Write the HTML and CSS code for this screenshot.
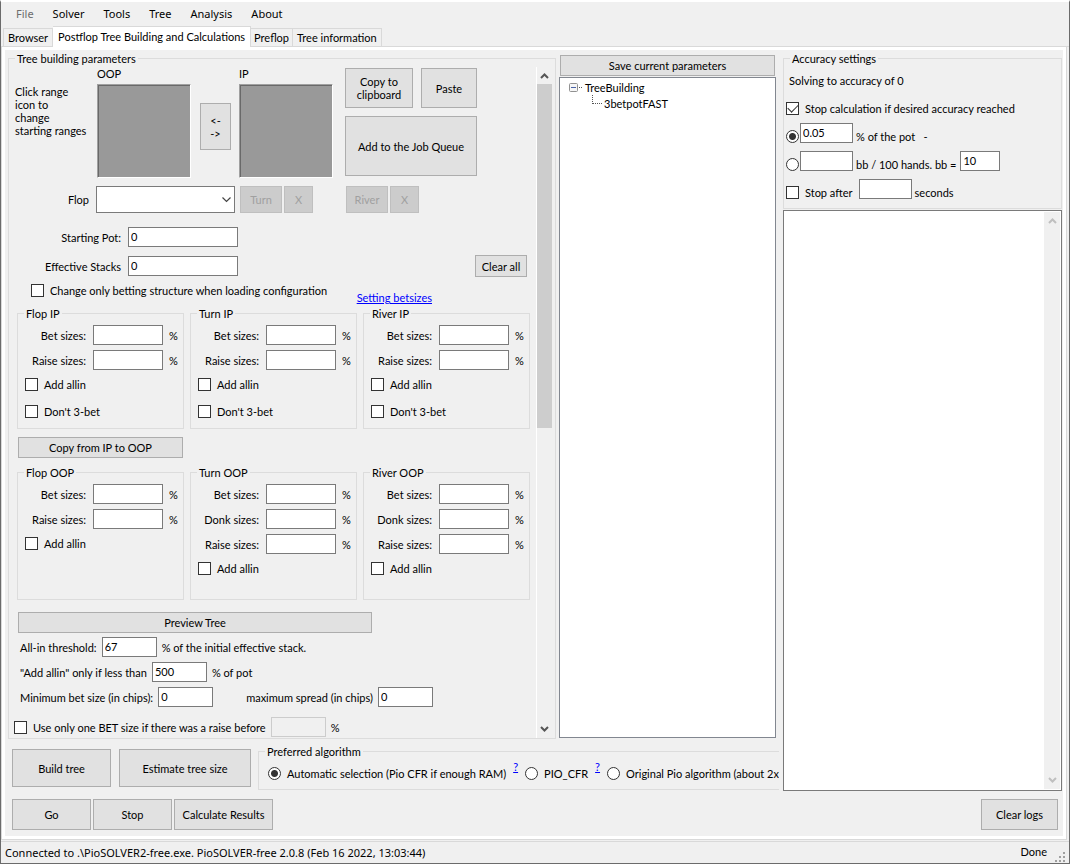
FILE: index.html
```html
<!DOCTYPE html>
<html lang="en">
<head>
    <meta charset="UTF-8">
    <meta name="viewport" content="width=device-width, initial-scale=1.0">
    <title>PioSOLVER</title>
    <link rel="stylesheet" href="styles.css">
</head>
<body>
    <!-- menu -->
    <nav class="menu">
        <button class="menu-item" disabled>File</button>
        <button class="menu-item">Solver</button>
        <button class="menu-item">Tools</button>
        <button class="menu-item">Tree</button>
        <button class="menu-item">Analysis</button>
        <button class="menu-item">About</button>
    </nav>

    <!-- tabs -->
    <div class="tabs" role="tablist">
        <button class="tab" role="tab">Browser</button>
        <button class="tab active" role="tab" aria-selected="true">Postflop Tree Building and Calculations</button>
        <button class="tab" role="tab">Preflop</button>
        <button class="tab info" role="tab">Tree information</button>
    </div>

    <main class="page">
        <div class="left">
            <div class="top">
                <!-- tree building parameters -->
                <fieldset class="group params">
                    <legend>Tree building parameters</legend>
                    <div class="scroll-body">
                        <div class="content">
                            <div class="ranges">
                                <p class="hint">Click range<br>icon to<br>change<br>starting ranges</p>
                                <div class="range">
                                    <span>OOP</span>
                                    <div class="range-box"></div>
                                </div>
                                <button class="btn swap">&lt;-<br>-&gt;</button>
                                <div class="range">
                                    <span>IP</span>
                                    <div class="range-box"></div>
                                </div>
                                <div class="clip-btns">
                                    <button class="btn">Copy to<br>clipboard</button>
                                    <button class="btn">Paste</button>
                                    <button class="btn queue">Add to the Job Queue</button>
                                </div>
                            </div>

                            <div class="board">
                                <label for="flop">Flop</label>
                                <div class="select-wrap">
                                    <select id="flop"><option></option></select>
                                    <svg width="9" height="6" viewBox="0 0 9 6"><path d="M0.5 0.5 L4.5 4.5 L8.5 0.5" fill="none" stroke="#444" stroke-width="1.2"/></svg>
                                </div>
                                <div class="street">
                                    <button class="btn card" disabled>Turn</button>
                                    <button class="btn" disabled>X</button>
                                </div>
                                <div class="street river">
                                    <button class="btn card" disabled>River</button>
                                    <button class="btn" disabled>X</button>
                                </div>
                            </div>

                            <div class="stack-row">
                                <label for="pot">Starting Pot:</label>
                                <input type="text" id="pot" class="wide" value="0">
                            </div>
                            <div class="stack-row">
                                <label for="stacks">Effective Stacks</label>
                                <input type="text" id="stacks" class="wide" value="0">
                                <button class="btn clear-all">Clear all</button>
                            </div>

                            <div class="config">
                                <label class="check"><input type="checkbox">Change only betting structure when loading configuration</label>
                                <a href="#">Setting betsizes</a>
                            </div>

                            <!-- IP bet sizes -->
                            <div class="streets ip">
                                <fieldset class="group">
                                    <legend>Flop IP</legend>
                                    <div class="size"><label for="fib">Bet sizes:</label><input type="text" id="fib"><span>%</span></div>
                                    <div class="size"><label for="fir">Raise sizes:</label><input type="text" id="fir"><span>%</span></div>
                                    <label class="check"><input type="checkbox">Add allin</label>
                                    <label class="check"><input type="checkbox">Don't 3-bet</label>
                                </fieldset>
                                <fieldset class="group">
                                    <legend>Turn IP</legend>
                                    <div class="size"><label for="tib">Bet sizes:</label><input type="text" id="tib"><span>%</span></div>
                                    <div class="size"><label for="tir">Raise sizes:</label><input type="text" id="tir"><span>%</span></div>
                                    <label class="check"><input type="checkbox">Add allin</label>
                                    <label class="check"><input type="checkbox">Don't 3-bet</label>
                                </fieldset>
                                <fieldset class="group">
                                    <legend>River IP</legend>
                                    <div class="size"><label for="rib">Bet sizes:</label><input type="text" id="rib"><span>%</span></div>
                                    <div class="size"><label for="rir">Raise sizes:</label><input type="text" id="rir"><span>%</span></div>
                                    <label class="check"><input type="checkbox">Add allin</label>
                                    <label class="check"><input type="checkbox">Don't 3-bet</label>
                                </fieldset>
                            </div>

                            <button class="btn copy">Copy from IP to OOP</button>

                            <!-- OOP bet sizes -->
                            <div class="streets oop">
                                <fieldset class="group">
                                    <legend>Flop OOP</legend>
                                    <div class="size"><label for="fob">Bet sizes:</label><input type="text" id="fob"><span>%</span></div>
                                    <div class="size"><label for="for">Raise sizes:</label><input type="text" id="for"><span>%</span></div>
                                    <label class="check"><input type="checkbox">Add allin</label>
                                </fieldset>
                                <fieldset class="group">
                                    <legend>Turn OOP</legend>
                                    <div class="size"><label for="tob">Bet sizes:</label><input type="text" id="tob"><span>%</span></div>
                                    <div class="size"><label for="tod">Donk sizes:</label><input type="text" id="tod"><span>%</span></div>
                                    <div class="size"><label for="tor">Raise sizes:</label><input type="text" id="tor"><span>%</span></div>
                                    <label class="check"><input type="checkbox">Add allin</label>
                                </fieldset>
                                <fieldset class="group">
                                    <legend>River OOP</legend>
                                    <div class="size"><label for="rob">Bet sizes:</label><input type="text" id="rob"><span>%</span></div>
                                    <div class="size"><label for="rod">Donk sizes:</label><input type="text" id="rod"><span>%</span></div>
                                    <div class="size"><label for="ror">Raise sizes:</label><input type="text" id="ror"><span>%</span></div>
                                    <label class="check"><input type="checkbox">Add allin</label>
                                </fieldset>
                            </div>

                            <button class="btn preview">Preview Tree</button>

                            <div class="limits">
                                <div class="limit">
                                    <label for="threshold">All-in threshold:</label>
                                    <input type="text" id="threshold" value="67">
                                    <span>% of the initial effective stack.</span>
                                </div>
                                <div class="limit">
                                    <label for="allin">"Add allin" only if less than</label>
                                    <input type="text" id="allin" value="500">
                                    <span>% of pot</span>
                                </div>
                                <div class="limit">
                                    <label for="minbet">Minimum bet size (in chips):</label>
                                    <input type="text" id="minbet" value="0">
                                    <label for="spread" class="spread">maximum spread (in chips)</label>
                                    <input type="text" id="spread" value="0">
                                </div>
                            </div>
                            <div class="limit one-bet">
                                <label class="check"><input type="checkbox">Use only one BET size if there was a raise before</label>
                                <input type="text" aria-label="Raise percent" disabled>
                                <span>%</span>
                            </div>
                        </div>

                        <div class="scrollbar">
                            <svg width="9" height="6" viewBox="0 0 9 6"><path d="M1 5 L4.5 1.5 L8 5" fill="none" stroke="#555" stroke-width="2"/></svg>
                            <div class="thumb"></div>
                            <svg width="9" height="6" viewBox="0 0 9 6"><path d="M1 1 L4.5 4.5 L8 1" fill="none" stroke="#555" stroke-width="2"/></svg>
                        </div>
                    </div>
                </fieldset>

                <!-- saved trees -->
                <div class="saved">
                    <button class="btn">Save current parameters</button>
                    <ul class="tree">
                        <li>
                            <svg width="14" height="9" viewBox="0 0 14 9"><rect x="0.5" y="0.5" width="8" height="8" rx="1" fill="#f6f6f6" stroke="#919191"/><path d="M2 4.5 H7" stroke="#4b63a7"/><path d="M10 4.5 H14" stroke="#555" stroke-dasharray="1 1"/></svg>
                            TreeBuilding
                        </li>
                        <li class="child">
                            <svg width="10" height="9" viewBox="0 0 10 9"><path d="M0.5 0 V9" stroke="#555" stroke-dasharray="1 1"/><path d="M1 8.5 H10" stroke="#555" stroke-dasharray="1 1"/></svg>
                            3betpotFAST
                        </li>
                    </ul>
                </div>
            </div>

            <div class="build">
                <button class="btn">Build tree</button>
                <button class="btn estimate">Estimate tree size</button>
                <fieldset class="group algorithm">
                    <legend>Preferred algorithm</legend>
                    <div class="options">
                        <label class="check"><input type="radio" name="algorithm" checked>Automatic selection (Pio CFR if enough RAM)</label>
                        <a href="#">?</a>
                        <label class="check"><input type="radio" name="algorithm">PIO_CFR</label>
                        <a href="#">?</a>
                        <label class="check"><input type="radio" name="algorithm">Original Pio algorithm (about 2x</label>
                    </div>
                </fieldset>
            </div>

            <div class="run">
                <button class="btn">Go</button>
                <button class="btn">Stop</button>
                <button class="btn results">Calculate Results</button>
            </div>
        </div>

        <div class="right">
            <fieldset class="group accuracy">
                <legend>Accuracy settings</legend>
                <p>Solving to accuracy of 0</p>
                <label class="check stop-calc"><input type="checkbox" checked>Stop calculation if desired accuracy reached</label>
                <div class="goal">
                    <input type="radio" name="goal" aria-label="Percent of the pot" checked>
                    <input type="text" id="percent" value="0.05">
                    <label for="percent">% of the pot &nbsp; -</label>
                </div>
                <div class="goal">
                    <input type="radio" name="goal" aria-label="bb per 100 hands">
                    <input type="text" id="hands">
                    <label for="hands">bb / 100 hands. bb =</label>
                    <input type="text" class="bb" aria-label="bb" value="10">
                </div>
                <div class="goal after">
                    <label class="check"><input type="checkbox">Stop after</label>
                    <input type="text" id="seconds">
                    <label for="seconds">seconds</label>
                </div>
            </fieldset>
            <div class="log">
                <div class="scrollbar off">
                    <svg width="9" height="6" viewBox="0 0 9 6"><path d="M1 5 L4.5 1.5 L8 5" fill="none" stroke="#bfbfbf" stroke-width="2"/></svg>
                    <svg width="9" height="6" viewBox="0 0 9 6"><path d="M1 1 L4.5 4.5 L8 1" fill="none" stroke="#bfbfbf" stroke-width="2"/></svg>
                </div>
            </div>
            <button class="btn clear-logs">Clear logs</button>
        </div>
    </main>

    <footer class="status">
        <span>Connected to .\PioSOLVER2-free.exe. PioSOLVER-free 2.0.8 (Feb 16 2022, 13:03:44)</span>
        <span class="done">Done</span>
        <svg width="11" height="11" viewBox="0 0 11 11" fill="#a0a0a0"><path d="M8 0h2v2h-2zM4 4h2v2h-2zM8 4h2v2h-2zM0 8h2v2h-2zM4 8h2v2h-2zM8 8h2v2h-2z"/></svg>
    </footer>
</body>
</html>
```
FILE: styles.css
```css
* {
    margin: 0;
    padding: 0;
    box-sizing: border-box;
}

body {
    display: flex;
    flex-direction: column;
    min-height: 100vh;
    border: 1px solid #6b6b6b;
    border-top: 2px solid #fff;
    background-color: #f0f0f0;
    color: #000;
    font: 11px/13px Lato, "Liberation Sans", sans-serif;
}

button,
input,
select {
    font: inherit;
    color: inherit;
}

a {
    color: #0000ff;
}

/* menu */
.menu {
    display: flex;
    gap: 19px;
    height: 24px;
    padding-left: 15px;
}

.menu-item {
    border: none;
    background: none;
    font: 11px/16px "Noto Sans", sans-serif;
}

.menu-item:disabled {
    color: #6d6d6d;
}

/* tabs */
.tabs {
    display: flex;
    align-items: flex-end;
    height: 21px;
    padding-left: 2px;
    border-bottom: 1px solid #d9d9d9;
}

.tab {
    height: 18px;
    padding: 0 3px;
    border: 1px solid #d9d9d9;
    border-bottom: none;
    background-color: #f0f0f0;
}

.tab:first-child {
    padding: 0 4px;
}

.tab + .tab {
    border-left: none;
}

.tab.info {
    padding: 0 4px;
}

.tab.active {
    height: 21px;
    padding: 0 5px 2px;
    margin-bottom: -1px;
    background-color: #fff;
}

/* page */
.page {
    flex: 1;
    display: flex;
    gap: 4px;
    margin-right: 2px;
    padding: 5px 4px 9px 3px;
    border: 1px solid #d9d9d9;
    border-top: none;
    box-shadow: inset 0 0 0 3px #fff;
}

.left {
    flex: 1;
    min-width: 0;
    display: flex;
    flex-direction: column;
    padding-left: 3px;
}

.group {
    min-width: 0;
    border: 1px solid #dcdcdc;
}

.group legend {
    margin-left: 6px;
    padding: 0 2px;
}

.btn {
    border: 1px solid #adadad;
    background-color: #e1e1e1;
    text-align: center;
}

.btn:disabled {
    border-color: #bfbfbf;
    background-color: #ccc;
    color: #a0a0a0;
}

input[type="text"] {
    width: 70px;
    height: 20px;
    padding: 0 2px 2px;
    border: 1px solid #7a7a7a;
    background-color: #fff;
}

input[type="text"]:disabled {
    border-color: #ccc;
    background-color: #f0f0f0;
}

input[type="checkbox"],
input[type="radio"] {
    appearance: none;
    flex: none;
    width: 13px;
    height: 13px;
    border: 1px solid #333;
    background-color: #fff;
}

input[type="radio"] {
    border-radius: 50%;
}

input[type="radio"]:checked {
    background-image: radial-gradient(circle, #333 3px, transparent 4px);
}

/* tick */
input[type="checkbox"]:checked::before {
    content: "";
    display: block;
    width: 9px;
    height: 5px;
    margin: 1px 1px;
    border: solid #333;
    border-width: 0 0 1px 1px;
    transform: rotate(-45deg);
}

.check {
    display: flex;
    align-items: center;
    gap: 6px;
    white-space: nowrap;
}

/* tree building parameters */
.top {
    flex: 1;
    display: flex;
    gap: 3px;
}

.params {
    flex: none;
    width: 548px;
}

.scroll-body {
    display: flex;
    height: 100%;
    padding: 2px 3px 0 0;
}

.content {
    flex: 1;
    padding: 0 6px 0 8px;
}

.ranges {
    display: flex;
}

.hint {
    width: 82px;
    margin-left: -2px;
    padding-top: 18px;
}

.range-box {
    width: 94px;
    height: 94px;
    margin-top: 4px;
    border: 1px solid;
    border-color: #a0a0a0 #fff #fff #a0a0a0;
    background-color: #999;
    box-shadow: inset 1px 1px #696969;
}

.swap {
    width: 31px;
    height: 47px;
    margin: 36px 8px 0 9px;
}

.clip-btns {
    display: grid;
    grid-template: 40px 60px / 68px 56px;
    gap: 8px;
    margin: 1px 0 0 12px;
}

.queue {
    grid-column: span 2;
}

.board {
    display: flex;
    align-items: center;
    margin-top: 8px;
}

.board label {
    width: 72px;
    margin-right: 7px;
    text-align: right;
}

.select-wrap {
    position: relative;
    width: 139px;
    height: 27px;
}

.select-wrap select {
    appearance: none;
    width: 100%;
    height: 100%;
    border: 1px solid #7a7a7a;
    border-radius: 0;
    background-color: #fff;
}

.select-wrap svg {
    position: absolute;
    top: 11px;
    right: 4px;
    pointer-events: none;
}

.street {
    display: flex;
    gap: 2px;
    margin-left: 5px;
}

.street .btn {
    width: 29px;
    height: 27px;
}

.street .card {
    width: 42px;
}

.street.river {
    margin-left: 33px;
}

.stack-row {
    display: flex;
    align-items: center;
    height: 20px;
    margin-top: 9px;
}

.board + .stack-row {
    margin-top: 14px;
}

.stack-row label {
    width: 104px;
    margin-right: 7px;
    text-align: right;
}

.stack-row .wide {
    width: 110px;
}

.clear-all {
    width: 52px;
    height: 22px;
    margin: 0 3px 0 auto;
}

.config {
    display: flex;
    justify-content: space-between;
    align-items: flex-start;
    margin-top: 8px;
    padding: 0 98px 0 14px;
}

.config a {
    margin-top: 7px;
}

/* bet sizes */
.streets {
    display: grid;
    grid-template-columns: repeat(3, 167px);
    gap: 6px;
}

.streets.ip {
    height: 122px;
    margin-top: 3px;
}

.streets.oop {
    height: 134px;
    margin-top: 8px;
}

.size {
    display: flex;
    align-items: center;
    padding-top: 5px;
}

.size label {
    width: 68px;
    margin-right: 7px;
    text-align: right;
}

.size span {
    margin-left: 6px;
}

.streets .check {
    margin: 8px 0 0 7px;
}

.streets .check + .check {
    margin-top: 14px;
}

.copy {
    width: 165px;
    height: 21px;
    margin: 8px 0 0 1px;
}

.preview {
    display: block;
    width: 354px;
    height: 21px;
    margin: 12px 0 0 1px;
}

.limits {
    display: grid;
    gap: 5px;
    padding: 4px 0 0 3px;
}

.limit {
    display: flex;
    align-items: center;
    gap: 5px;
}

.limit input[type="text"] {
    width: 55px;
}

.spread {
    margin-left: 28px;
}

.one-bet {
    margin: 10px 0 0 -3px;
}

/* scrollbars */
.scrollbar {
    display: flex;
    flex-direction: column;
    align-items: center;
    width: 17px;
    padding: 6px 0;
    border-left: 1px solid #fff;
}

.thumb {
    width: 15px;
    height: 344px;
    margin: 5px 0 auto;
    background-color: #cdcdcd;
}

.scrollbar.off {
    justify-content: space-between;
    background-color: #f0f0f0;
}

/* saved trees */
.saved {
    flex: 1;
    display: flex;
    flex-direction: column;
    gap: 1px;
    padding: 3px 3px 1px 0;
}

.saved .btn {
    height: 21px;
    margin: 0 1px;
}

.tree {
    flex: 1;
    padding: 1px 9px;
    border: 1px solid #828790;
    background-color: #fff;
    list-style: none;
}

.tree li {
    display: flex;
    align-items: center;
    gap: 2px;
    height: 16px;
}

.tree .child {
    padding-left: 23px;
}

.tree .child svg {
    align-self: flex-start;
}

/* build and run */
.build {
    display: flex;
    align-items: flex-start;
    gap: 8px;
    margin-top: 6px;
    padding-left: 4px;
}

.build > .btn {
    flex: none;
    width: 99px;
    height: 38px;
    margin-top: 4px;
}

.build > .estimate {
    width: 132px;
}

.algorithm {
    flex: 1;
    height: 45px;
    margin-left: -1px;
    border-right: none;
    overflow: hidden;
}

.options {
    display: flex;
    gap: 7px;
    padding: 2px 0 0 9px;
}

.options .check {
    height: 26px;
}

.run {
    display: flex;
    gap: 2px;
    margin-top: 9px;
    padding-left: 4px;
}

.run .btn {
    width: 79px;
    height: 31px;
}

.run .results {
    width: 99px;
}

/* accuracy and log */
.right {
    flex: none;
    width: 279px;
    display: flex;
    flex-direction: column;
}

.accuracy {
    height: 157px;
    padding: 0 2px;
}

.accuracy legend {
    margin-left: 4px;
}

.accuracy p {
    padding: 9px 0 0 3px;
}

.stop-calc {
    margin: 15px 0 8px;
}

.goal {
    display: flex;
    align-items: flex-end;
    height: 20px;
    margin-bottom: 8px;
}

.goal input[type="text"] {
    width: 53px;
    margin: 0 3px 0 1px;
}

.goal input.bb {
    width: 40px;
    margin-left: 4px;
}

.after .check {
    margin-right: 5px;
}

.log {
    flex: 1;
    display: flex;
    justify-content: flex-end;
    margin-top: 1px;
    padding: 1px;
    border: 1px solid #7a7a7a;
    background-color: #fff;
}

.clear-logs {
    align-self: flex-end;
    width: 77px;
    height: 31px;
    margin: 8px 4px 0 0;
}

/* status bar */
.status {
    display: flex;
    height: 22px;
    margin-top: 1px;
    padding: 3px 3px 0 4px;
    border-top: 1px solid #d9d9d9;
    font: 11px/16px "Noto Sans", sans-serif;
}

.status .done {
    margin: 0 8px 0 auto;
    font: 11px/13px Lato, "Liberation Sans", sans-serif;
}

.status svg {
    margin-top: 7px;
}
```
